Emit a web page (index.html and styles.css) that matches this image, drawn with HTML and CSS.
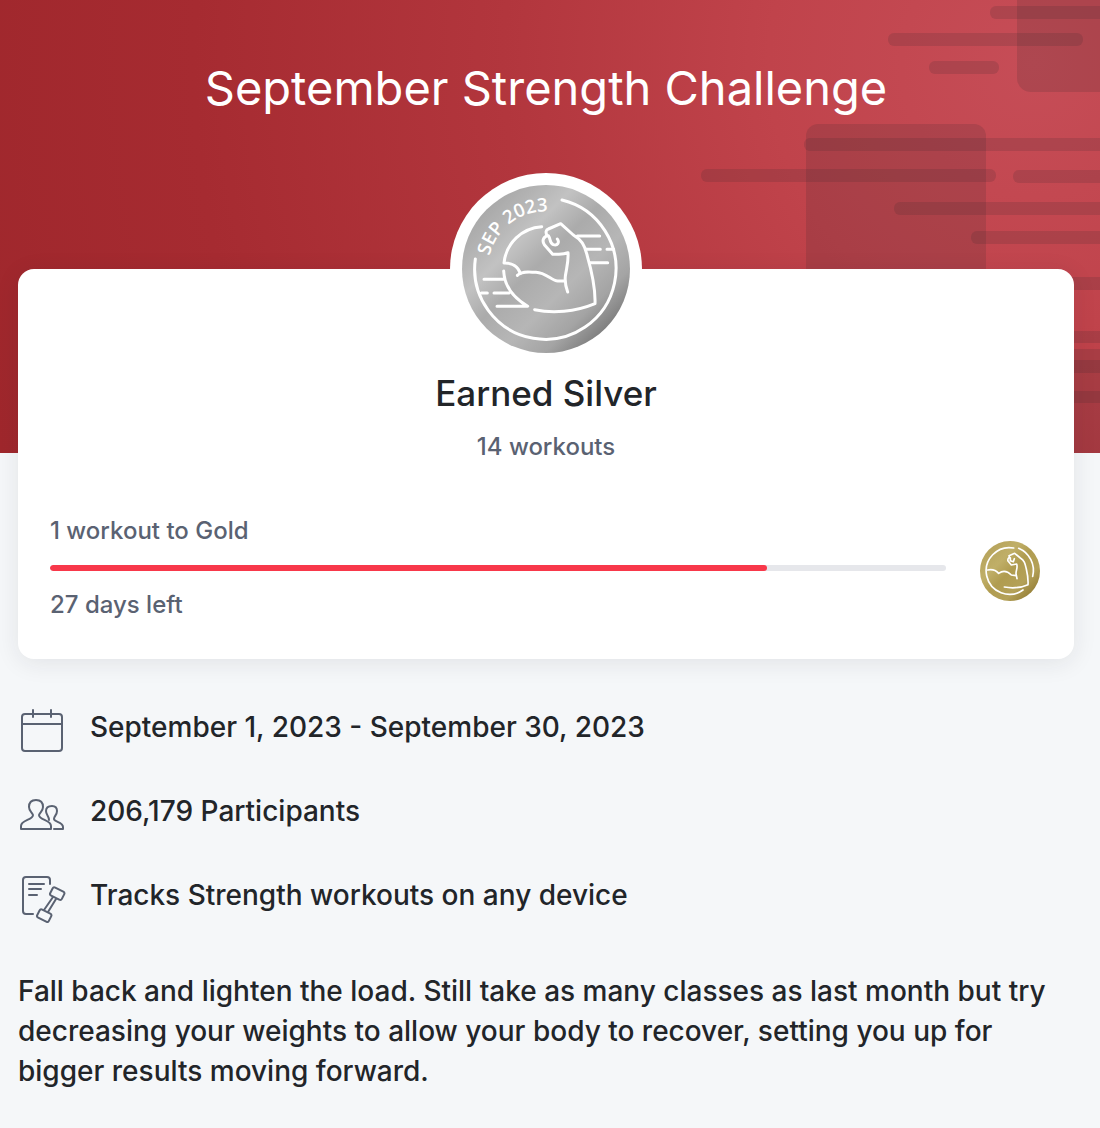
FILE: index.html
```html
<!DOCTYPE html>
<html lang="en">
<head>
<meta charset="utf-8">
<meta name="viewport" content="width=device-width, initial-scale=1">
<title>September Strength Challenge</title>
<link rel="stylesheet" href="styles.css">
</head>
<body>
<header class="hero">
  <svg class="hero-art" viewBox="0 0 410 453" aria-hidden="true">
    <rect x="327" y="-20" width="120" height="112" rx="14"/>
    <rect x="116" y="124" width="180" height="220" rx="12"/>
    <rect x="350" y="349" width="120" height="130"/>
    <rect x="300" y="6" width="130" height="13" rx="6"/>
    <rect x="198" y="33" width="195" height="13" rx="6"/>
    <rect x="239" y="61" width="70" height="13" rx="6"/>
    <rect x="114" y="138" width="320" height="13" rx="6"/>
    <rect x="11" y="169" width="295" height="13" rx="6"/>
    <rect x="323" y="170" width="120" height="13" rx="6"/>
    <rect x="204" y="202" width="230" height="13" rx="6"/>
    <rect x="281" y="231" width="150" height="13" rx="6"/>
    <rect x="350" y="277" width="120" height="13"/>
    <rect x="350" y="331" width="120" height="12"/>
    <rect x="350" y="360" width="120" height="13"/>
    <rect x="350" y="391" width="120" height="12"/>
  </svg>
  <h1 class="title">September Strength Challenge</h1>
</header>
<main class="content">
  <section class="card">
    <div class="medal-frame">
      <svg class="medal" viewBox="66 60 504 504" role="img" aria-label="Silver medal, September 2023">
        <defs>
          <linearGradient id="silver" x1="0.1" y1="0.1" x2="0.88" y2="0.9">
            <stop offset="0" stop-color="#a4a4a4"/>
            <stop offset=".15" stop-color="#b2b2b2"/>
            <stop offset=".3" stop-color="#c2c2c2"/>
            <stop offset=".46" stop-color="#ababab"/>
            <stop offset=".65" stop-color="#b6b6b6"/>
            <stop offset=".82" stop-color="#a4a4a4"/>
            <stop offset="1" stop-color="#747474"/>
          </linearGradient>
          <path id="date-arc" d="M146 287A173 173 0 0 1 440 190"/>
        </defs>
        <circle cx="318" cy="312" r="252" fill="url(#silver)"/>
        <text class="medal-date"><textPath href="#date-arc" startOffset="14">SEP 2023</textPath></text>
        <g class="medal-lines">
          <path d="M366 105A212 212 0 1 1 106 282"/>
          <path d="M305 185C246 189 198 234 192 294C216 293 235 304 241 326"/>
          <path d="M232 331C246 317 270 322 288 322C318 323 336 348 353 348H372"/>
          <path d="M383 381C377 365 374 354 376 334C380 306 386 290 384 263C366 271 352 266 338 268L313 239C304 226 313 212 325 212C333 223 328 234 340 239C353 243 359 232 352 222"/>
          <path d="M321 211C316 202 318 194 325 192L362 176L400 210C425 225 433 240 440 266C455 318 467 369 465 416C405 441 337 446 284 434"/>
          <path d="M191 318C193 362 218 397 263 424H171M132 343H195M162 384H207M124 384H142M412 213H479M437 253H481M501 253H521M449 293H503"/>
        </g>
      </svg>
    </div>
    <h2 class="award">Earned Silver</h2>
    <p class="count">14 workouts</p>
    <div class="goal">
      <div class="goal-info">
        <label class="goal-text" for="goal-bar">1 workout to Gold</label>
        <progress class="bar" id="goal-bar" value="80" max="100"></progress>
        <p class="goal-text">27 days left</p>
      </div>
      <svg class="medal-small" viewBox="30 32 180 180" role="img" aria-label="Gold medal">
        <defs>
          <linearGradient id="gold" x1="0.1" y1="0.1" x2="0.9" y2="0.9">
            <stop offset="0" stop-color="#b5a25a"/>
            <stop offset=".3" stop-color="#c0af68"/>
            <stop offset=".5" stop-color="#b09c50"/>
            <stop offset=".75" stop-color="#b4a158"/>
            <stop offset="1" stop-color="#927c35"/>
          </linearGradient>
        </defs>
        <circle cx="120" cy="122" r="90" fill="url(#gold)"/>
        <g class="small-lines">
          <path d="M131 53A70 70 0 1 0 159 179"/>
          <path d="M146 54A72 72 0 0 1 188 138"/>
          <path d="M53 119C68 116 78 120 86 129C102 118 116 126 124 134L138 136M141 145L138 130C138 118 144 112 140 101L124 104L114 92C112 85 117 80 121 83V91L130 94L133 85"/>
          <path d="M119 82L117 76L134 69L151 83C164 91 165 99 169 116C173 133 175 148 174 163C151 173 124 174 103 170"/>
        </g>
      </svg>
    </div>
  </section>
  <ul class="facts">
    <li class="fact">
      <svg class="fact-icon" viewBox="0 0 48 48" aria-hidden="true">
        <rect x="4" y="7" width="40" height="37" rx="3"/>
        <path d="M4 17H44M15 3V10M33 3V10"/>
      </svg>
      <span>September 1, 2023 - September 30, 2023</span>
    </li>
    <li class="fact">
      <svg class="fact-icon" viewBox="0 0 48 48" aria-hidden="true">
        <path d="M18 9C23 9 25 12 25 16C25 20 22 21 21 24C21 29 33 29 33 35V38H3V35C3 29 15 29 15 24C14 21 11 20 11 16C11 12 13 9 18 9Z"/>
        <path d="M31 29C31 25 28 24 28 20C28 17 30 15 34 15C37 15 39 17 39 20C39 24 36 25 36 28C36 31 45 31 45 36V38H36"/>
      </svg>
      <span>206,179 Participants</span>
    </li>
    <li class="fact">
      <svg class="fact-icon" viewBox="0 0 48 48" aria-hidden="true">
        <path d="M15 39H8Q5 39 5 36V5Q5 2 8 2H29Q32 2 32 5V9M11 9H26M11 14H23M11 20H19"/>
        <rect x="33" y="14" width="13" height="9" rx="2" transform="rotate(27 39 18)"/>
        <rect x="20" y="36" width="13" height="9" rx="2" transform="rotate(27 26 40)"/>
        <path d="M35 22L26 35M38 24L30 37"/>
      </svg>
      <span>Tracks Strength workouts on any device</span>
    </li>
  </ul>
  <p class="about">Fall back and lighten the load. Still take as many classes as last month but try decreasing your weights to allow your body to recover, setting you up for bigger results moving forward.</p>
</main>
</body>
</html>
```
FILE: styles.css
```css
* {
  box-sizing: border-box;
}

body,
h1,
h2,
p,
ul {
  margin: 0;
  padding: 0;
}

body {
  background: #f5f7f9;
  color: #222529;
  font-family: Inter, "Liberation Sans", sans-serif;
}

.hero {
  position: relative;
  overflow: hidden;
  padding: 56px 26px 333px 18px;
  background: radial-gradient(circle at 94% 14%, #c64d57 0, #c0434b 24%, #b2363d 48%, #a62b31 76%, #9f272c 100%);
}

.hero-art {
  position: absolute;
  top: 0;
  right: 0;
  width: 410px;
  height: 453px;
  fill: #3a2a2e;
  fill-opacity: .17;
}

.title {
  position: relative;
  color: #fff;
  font-size: 47px;
  font-weight: 400;
  line-height: 64px;
  text-align: center;
}

.content {
  position: relative;
  margin-top: -184px;
  padding: 0 26px 36px 18px;
}

.card {
  display: flex;
  flex-direction: column;
  align-items: center;
  padding: 0 32px 38px;
  border-radius: 16px;
  background: #fff;
  box-shadow: 0 4px 24px rgba(34, 37, 41, .09);
}

.medal-frame {
  margin-top: -96px;
  padding: 12px;
  border-radius: 50%;
  background: #fff;
}

.medal {
  display: block;
  width: 168px;
  height: 168px;
}

.medal-date {
  fill: #fff;
  font-family: "Open Sans", sans-serif;
  font-size: 56px;
  font-weight: 600;
}

.medal-lines,
.small-lines {
  fill: none;
  stroke: #fff;
  stroke-width: 9;
  stroke-linecap: round;
  stroke-linejoin: round;
}

.small-lines {
  stroke-width: 5;
}

.award {
  margin-top: 4px;
  font-size: 35px;
  font-weight: 500;
  line-height: 48px;
}

.count {
  margin-top: 14px;
}

.count,
.goal-text {
  color: #5a6272;
  font-size: 24px;
  font-weight: 500;
  line-height: 32px;
}

.goal {
  display: flex;
  align-items: center;
  gap: 34px;
  width: 100%;
  margin-top: 52px;
  padding-right: 2px;
}

.goal-info {
  display: flex;
  flex: 1;
  flex-direction: column;
}

.bar {
  appearance: none;
  width: 100%;
  height: 6px;
  margin: 18px 0;
  overflow: hidden;
  border: 0;
  border-radius: 3px;
  background: #e6e7eb;
}

.bar::-webkit-progress-bar {
  background: #e6e7eb;
}

.bar::-webkit-progress-value {
  border-radius: 3px;
  background: #f8384a;
}

.bar::-moz-progress-bar {
  border-radius: 3px;
  background: #f8384a;
}

.medal-small {
  width: 60px;
  height: 60px;
  margin-top: 6px;
}

.facts {
  display: flex;
  flex-direction: column;
  gap: 36px;
  margin-top: 48px;
  list-style: none;
}

.fact {
  display: flex;
  align-items: flex-start;
  gap: 24px;
  font-size: 28px;
  font-weight: 500;
  line-height: 40px;
}

.fact-icon {
  flex: none;
  width: 48px;
  height: 48px;
  fill: none;
  stroke: #5a6272;
  stroke-width: 2;
  stroke-linecap: round;
  stroke-linejoin: round;
}

.about {
  margin-top: 48px;
  font-size: 28px;
  font-weight: 500;
  line-height: 40px;
}
```
